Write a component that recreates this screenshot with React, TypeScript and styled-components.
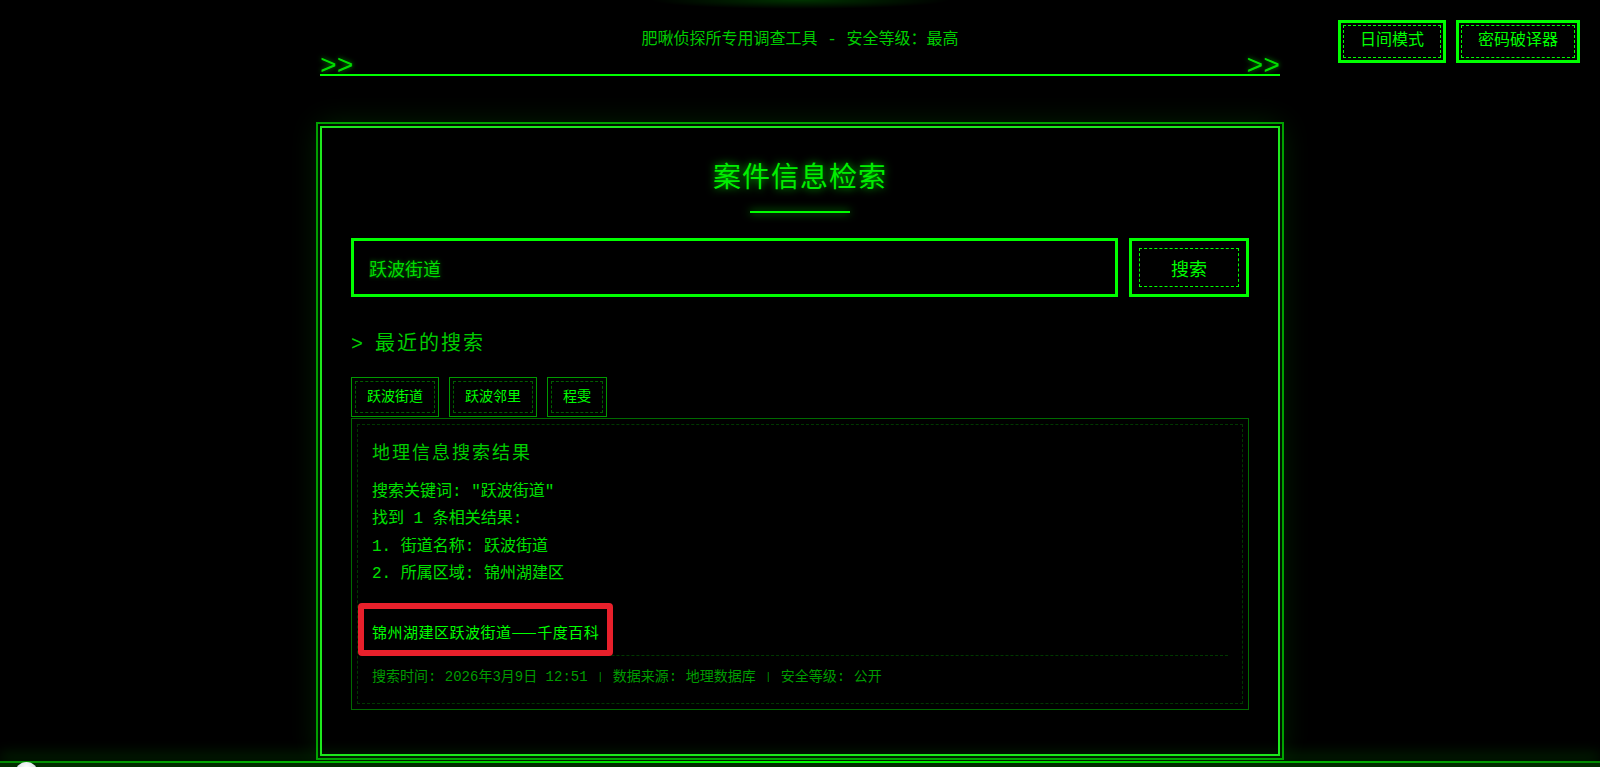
import React from "react";
import styled, { createGlobalStyle } from "styled-components";

const GREEN = "#00ff00";
const MONO = `"Liberation Mono", "Noto Sans CJK SC", monospace`;

const recentSearches = ["跃波街道", "跃波邻里", "程雯"];

const resultLines = [
  '搜索关键词: "跃波街道"',
  "找到 1 条相关结果:",
  "1. 街道名称: 跃波街道",
  "2. 所属区域: 锦州湖建区",
];

const GlobalStyle = createGlobalStyle`
  html, body {
    margin: 0;
    padding: 0;
  }
  body {
    height: 767px;
    overflow: hidden;
    font-family: ${MONO};
    color: ${GREEN};
    background:
      radial-gradient(150px 9px at 800px 0, rgba(0, 255, 0, 0.2), transparent),
      #000;
  }
`;

const Page = styled.div`
  position: relative;
  box-sizing: border-box;
  min-height: 767px;
  padding-top: 28px;
`;

const Header = styled.header`
  width: 960px;
  margin: 0 auto;
  border-bottom: 2px solid ${GREEN};
`;

const Subtitle = styled.div`
  text-align: center;
  font-size: 16px;
  line-height: 25px;
  color: #00cc00;
`;

const ArrowRow = styled.div`
  display: flex;
  justify-content: space-between;
  height: 21px;
  font-size: 28px;
  line-height: 28px;
  color: #00dd00;
  text-shadow: 0 0 5px rgba(0, 255, 0, 0.6);
`;

const TopActions = styled.nav`
  position: absolute;
  top: 20px;
  right: 20px;
  display: flex;
  gap: 10px;
`;

const DashedButton = styled.button<{ $inset: number }>`
  position: relative;
  box-sizing: border-box;
  border: 3px solid ${GREEN};
  background: #000;
  color: ${GREEN};
  font-family: ${MONO};
  cursor: pointer;

  &::before {
    content: "";
    position: absolute;
    inset: ${({ $inset }) => $inset}px;
    border: 1px dashed ${GREEN};
    pointer-events: none;
  }
`;

const ModeButton = styled(DashedButton)`
  padding: 9px 19px;
  font-size: 16px;
  line-height: 19px;
`;

const Panel = styled.main`
  box-sizing: border-box;
  width: 960px;
  margin: 50px auto 0;
  padding: 30px 29px 44px;
  border: 2px solid #1ee81e;
  outline: 2px solid #00a000;
  outline-offset: 2px;
  box-shadow: 0 0 28px rgba(0, 255, 0, 0.16);
`;

const Title = styled.h1`
  margin: 0;
  padding-top: 4px;
  text-align: center;
  font-size: 28px;
  font-weight: normal;
  line-height: 36px;
  letter-spacing: 1px;
  color: #00ee00;
  text-shadow: 0 0 9px rgba(0, 255, 0, 0.8);
`;

const TitleRule = styled.div`
  width: 100px;
  height: 2px;
  margin: 13px auto 0;
  background: ${GREEN};
  box-shadow: 0 0 8px rgba(0, 255, 0, 0.8);
`;

const SearchRow = styled.form`
  display: flex;
  gap: 11px;
  margin-top: 25px;
  height: 59px;
`;

const SearchInput = styled.input`
  flex: 1;
  box-sizing: border-box;
  height: 59px;
  padding: 0 15px;
  border: 3px solid ${GREEN};
  background: #000;
  color: #00dd00;
  font-family: ${MONO};
  font-size: 18px;
  text-shadow: 0 0 4px rgba(0, 255, 0, 0.5);
  outline: none;
`;

const SearchButton = styled(DashedButton)`
  width: 120px;
  height: 59px;
  font-size: 18px;
`;

const RecentTitle = styled.h3`
  margin: 34px 0 0;
  font-size: 20px;
  font-weight: normal;
  line-height: 28px;
  letter-spacing: 2px;
  color: #00cc00;
`;

const Prompt = styled.span`
  letter-spacing: 0;
`;

const TagList = styled.div`
  display: flex;
  gap: 10px;
  margin-top: 18px;
`;

const Tag = styled.button`
  position: relative;
  padding: 9px 15px;
  border: 1px solid #009a00;
  background: transparent;
  color: ${GREEN};
  font-family: ${MONO};
  font-size: 14px;
  line-height: 20px;
  cursor: pointer;

  &::before {
    content: "";
    position: absolute;
    inset: 3px;
    border: 1px dashed #006000;
  }
`;

const ResultsBox = styled.section`
  margin-top: 1px;
  padding: 5px;
  border: 1px solid #006a00;
`;

const ResultsInner = styled.div`
  padding: 17px 14px 14px;
  border: 1px dashed rgba(0, 255, 0, 0.22);
`;

const ResultTitle = styled.h4`
  margin: 0 0 12px;
  font-size: 18px;
  font-weight: normal;
  line-height: 25px;
  letter-spacing: 2px;
  color: #00cc00;
`;

const ResultLine = styled.div`
  font-size: 16px;
  line-height: 27.3px;
  color: #00e000;
  white-space: pre;
`;

const LinkRow = styled.div`
  margin: 31px 0 8px;
  line-height: 25px;
`;

const SourceLink = styled.a`
  position: relative;
  display: inline-block;
  font-family: "Noto Sans CJK SC", sans-serif;
  font-size: 15px;
  line-height: 25px;
  letter-spacing: 0.5px;
  color: ${GREEN};
  text-decoration: none;

  &::after {
    content: "";
    position: absolute;
    left: -14px;
    right: -14px;
    top: -16px;
    bottom: -12px;
    border: 6px solid #e8202b;
    border-radius: 4px;
  }
`;

const Meta = styled.div`
  padding-top: 10px;
  border-top: 1px dashed rgba(0, 255, 0, 0.22);
  font-size: 14px;
  line-height: 22px;
  color: #009c00;
  white-space: pre;
`;

const Sep = styled.span`
  display: inline-block;
  width: 8.4px;
  text-align: center;
  font-size: 10px;
  vertical-align: 1px;
`;

const BottomBar = styled.div`
  position: fixed;
  left: 0;
  right: 0;
  bottom: 0;
  height: 6px;
  background:
    linear-gradient(90deg, #008a00, #00ff00 50%, #008a00) top / 100% 2px no-repeat,
    #002c00;
  box-shadow: 0 -6px 14px rgba(0, 255, 0, 0.22);
`;

const FloatBubble = styled.div`
  position: fixed;
  left: 15px;
  bottom: -18px;
  width: 23px;
  height: 23px;
  border-radius: 50%;
  background: radial-gradient(circle at 50% 25%, #ffffff, #aebccb);
`;

const App = () => (
  <>
    <GlobalStyle />
    <Page>
      <Header>
        <Subtitle>肥啾侦探所专用调查工具 - 安全等级：最高</Subtitle>
        <ArrowRow>
          <span>&gt;&gt;</span>
          <span>&gt;&gt;</span>
        </ArrowRow>
      </Header>

      <TopActions>
        <ModeButton $inset={2}>日间模式</ModeButton>
        <ModeButton $inset={2}>密码破译器</ModeButton>
      </TopActions>

      <Panel>
        <Title>案件信息检索</Title>
        <TitleRule />

        <SearchRow onSubmit={(e) => e.preventDefault()}>
          <SearchInput defaultValue="跃波街道" />
          <SearchButton $inset={7} type="submit">
            搜索
          </SearchButton>
        </SearchRow>

        <RecentTitle>
          <Prompt>&gt; </Prompt>最近的搜索
        </RecentTitle>
        <TagList>
          {recentSearches.map((item) => (
            <Tag key={item} type="button">
              {item}
            </Tag>
          ))}
        </TagList>

        <ResultsBox>
          <ResultsInner>
            <ResultTitle>地理信息搜索结果</ResultTitle>
            {resultLines.map((line) => (
              <ResultLine key={line}>{line}</ResultLine>
            ))}
            <LinkRow>
              <SourceLink href="#">锦州湖建区跃波街道——千度百科</SourceLink>
            </LinkRow>
            <Meta>
              搜索时间: 2026年3月9日 12:51 <Sep>|</Sep> 数据来源: 地理数据库 <Sep>|</Sep> 安全等级: 公开
            </Meta>
          </ResultsInner>
        </ResultsBox>
      </Panel>

      <BottomBar />
      <FloatBubble />
    </Page>
  </>
);

export default App;
